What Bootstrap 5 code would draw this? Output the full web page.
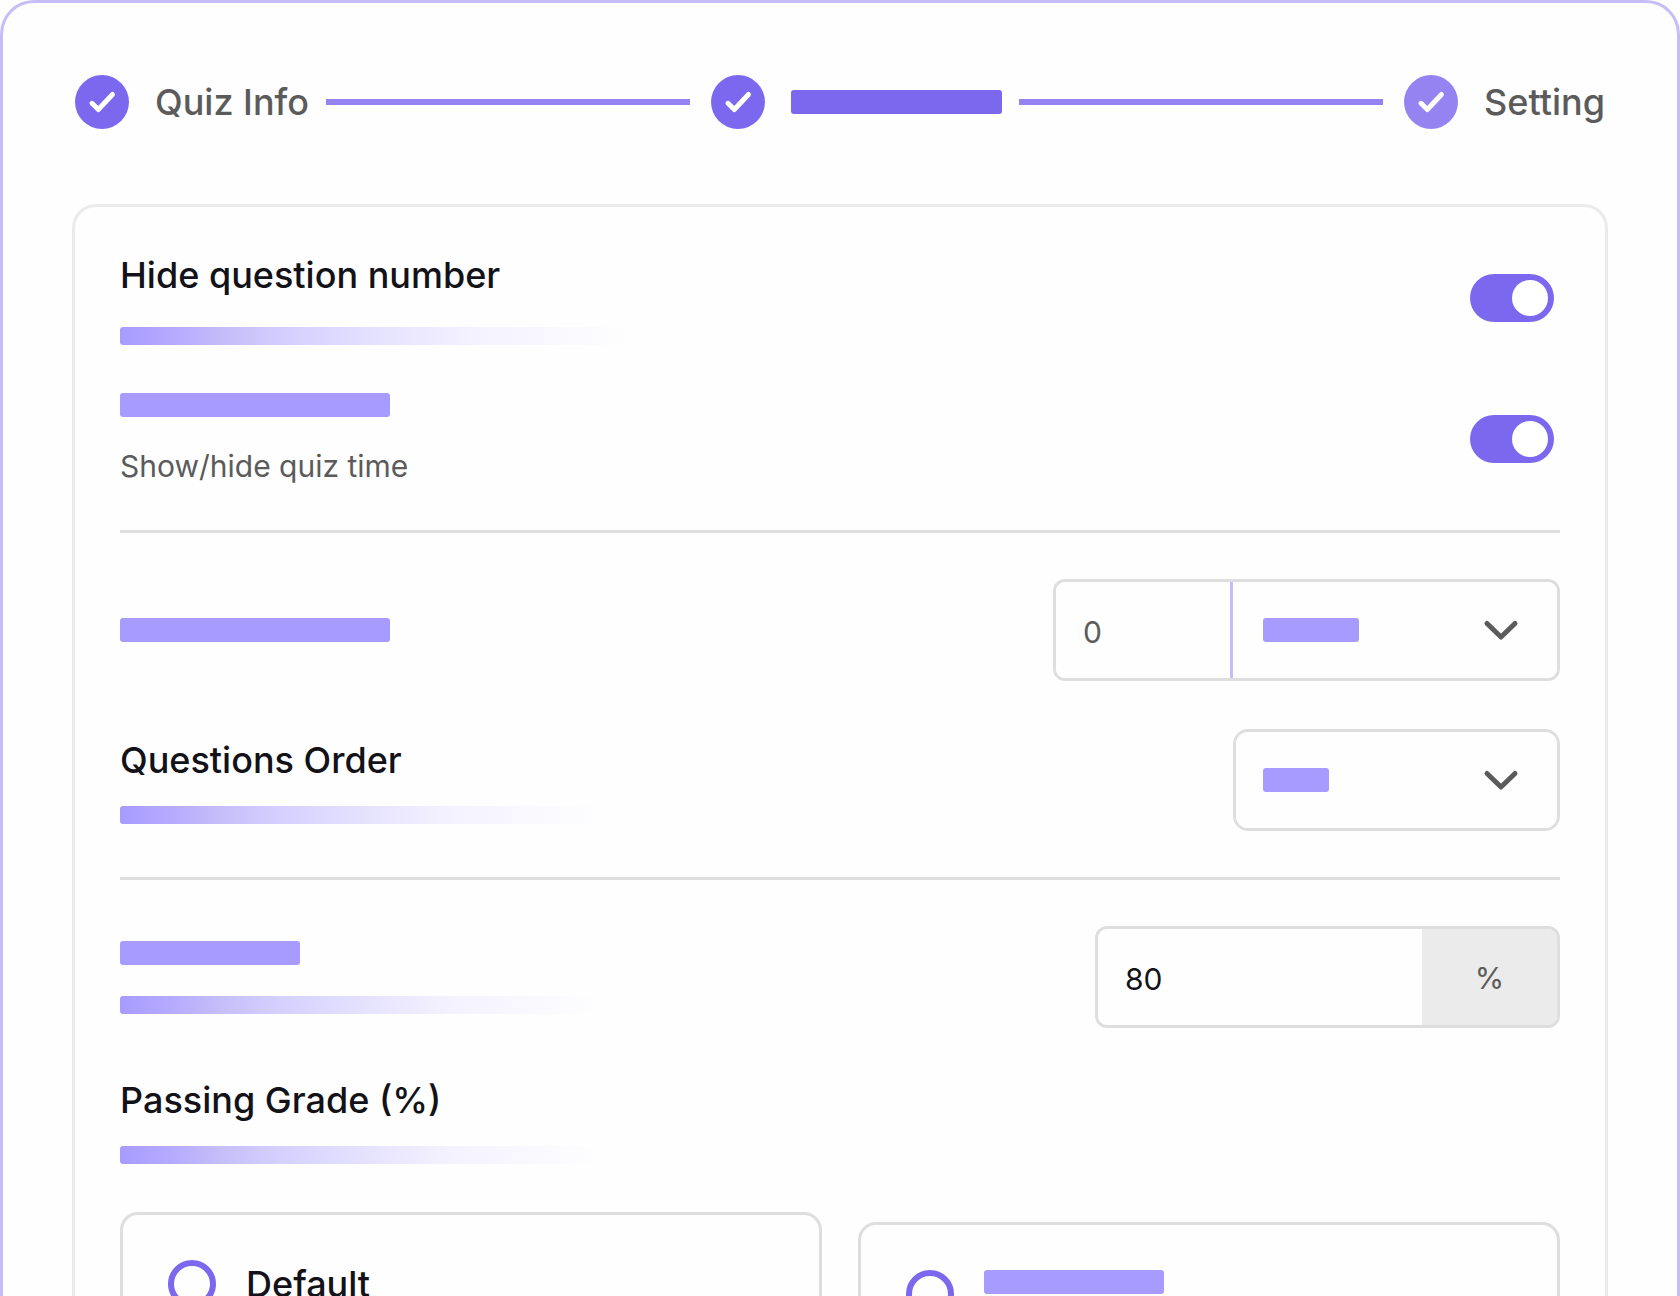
<!DOCTYPE html>
<html lang="en">
<head>
<meta charset="utf-8">
<meta name="viewport" content="width=device-width, initial-scale=1">
<title>Quiz settings</title>
<link href="https://cdn.jsdelivr.net/npm/bootstrap@5.3.0/dist/css/bootstrap.min.css" rel="stylesheet">
<style>
  :root {
    --violet: #7c68ee;
    --violet-mid: #9483f1;
    --violet-soft: #a79bff;
    --violet-pale: #c6bdf8;
    --ink: #121218;
    --ink-soft: #5b5b5b;
    --line: #dedede;
    --line-soft: #ebebeb;
    --paper: #fefefe;
  }
  body { font-family: Inter, "Liberation Sans", sans-serif; color: var(--ink); background: var(--paper); }

  .frame { border: 3px solid var(--violet-pale); border-bottom: 0; border-radius: 34px 34px 0 0; padding: 72px 69px 0; }

  /* Stepper */
  .steps { padding: 0 3px; margin-bottom: 75px; }
  .step { gap: 26px; font-size: 36px; line-height: 54px; font-weight: 500; color: var(--ink-soft); }
  .step-dot { width: 54px; height: 54px; background: var(--violet); }
  .step-dot.is-current { background: var(--violet-mid); }
  .step-line { height: 6px; margin: 0 21px 0 17px; background: var(--violet-mid); }

  /* Settings panel */
  .panel { border: 3px solid var(--line-soft); border-bottom: 0; border-radius: 24px 24px 0 0; padding: 44px 45px 0; }
  .panel-rows { gap: 48px; }
  .panel-rule { height: 3px; margin: 46px 0; border: 0; background: var(--line); opacity: 1; }
  .heading { font-size: 36px; line-height: 48px; font-weight: 500; margin: 0; }
  .hint { font-size: 30px; line-height: 36px; color: var(--ink-soft); margin: 0; }
  .gap-sm { gap: 22px; }
  .gap-md { gap: 28px; }
  .gap-lg { gap: 31px; }

  /* Placeholder bars */
  .bar { display: block; height: 24px; border-radius: 3px; background: var(--violet-soft); }
  .bar-title { width: 211px; background: var(--violet); }
  .bar-270 { width: 270px; }
  .bar-180 { width: 180px; }
  .bar-96 { width: 96px; }
  .bar-66 { width: 66px; }
  .fade-bar { width: 480px; height: 18px; border-radius: 3px;
    background: linear-gradient(90deg, #a79bff 0, #b6abff 11%, #c6bef9 21%, #d4ceff 32%, #e2deff 47%, #f4f2ff 69%, var(--paper) 100%); }
  .fade-bar.is-wide { width: 510px; }

  /* Controls */
  .form-switch.switch { padding: 0; margin: 0 6px 0 0; min-height: 0; }
  .switch .form-check-input { float: none; display: block; width: 84px; height: 48px; margin: 0; border: 0; border-radius: 24px; }
  .switch .form-check-input:checked { background-color: var(--violet); }

  .field { height: 102px; border: 3px solid var(--line); border-radius: 12px; overflow: hidden; }
  .field .form-control, .field .form-select { border: 0; border-radius: 0; background-color: var(--paper); font-size: 30px; height: 96px; color: var(--ink); }
  .field .form-control { padding: 3px 27px 0; }
  .field .form-select { background-image: none; }
  .field .form-control.is-muted { color: var(--ink-soft); }
  .field-time { width: 507px; }
  .field-time .form-control { width: 177px; border-right: 3px solid var(--violet-pale); }
  .field-order { width: 327px; border-radius: 15px; }
  .field-grade { width: 465px; }
  .field-grade .unit { width: 135px; padding-top: 3px; font-size: 30px; color: var(--ink-soft); background: var(--line-soft); }
  .select-face { padding: 0 38px 0 27px; pointer-events: none; }
  .field-time .select-face { padding-left: 30px; }

  .options { gap: 36px; margin-top: 48px; }
  .option { flex: 1 1 0; gap: 30px; min-height: 180px; padding: 45px; border: 3px solid var(--line); border-radius: 18px; }
  .option.is-lower { margin-top: 10px; }
  .option .form-check-input { flex: none; width: 48px; height: 48px; margin: 0; border: 6px solid var(--violet); background-color: var(--paper); }
</style>
</head>
<body>
<svg class="d-none" aria-hidden="true">
  <symbol id="tick" viewBox="0 0 54 54"><path d="M17 28.300 L23.300 34.500 L37.500 19.500" fill="none" stroke="#fff" stroke-width="5" stroke-linecap="round" stroke-linejoin="round"/></symbol>
  <symbol id="chevron" viewBox="0 0 36 24"><path d="M4 5.500 L18 19 L32 5.500" fill="none" stroke="#5b5b5b" stroke-width="5" stroke-linecap="round" stroke-linejoin="round"/></symbol>
</svg>

<main class="frame vh-100 overflow-hidden d-flex flex-column">
  <div class="steps d-flex align-items-center">
    <div class="step d-flex align-items-center">
      <svg class="step-dot rounded-circle" aria-hidden="true"><use href="#tick"/></svg>
      <span>Quiz Info</span>
    </div>
    <div class="step-line flex-fill"></div>
    <div class="step d-flex align-items-center">
      <svg class="step-dot rounded-circle" aria-hidden="true"><use href="#tick"/></svg>
      <span class="bar bar-title"></span>
    </div>
    <div class="step-line flex-fill"></div>
    <div class="step d-flex align-items-center">
      <svg class="step-dot is-current rounded-circle" aria-hidden="true"><use href="#tick"/></svg>
      <span>Setting</span>
    </div>
  </div>

  <form class="panel flex-fill">
    <section class="panel-rows d-flex flex-column">
      <div class="d-flex align-items-center justify-content-between">
        <div class="d-flex flex-column gap-md">
          <label class="heading" for="hideNumber">Hide question number</label>
          <div class="fade-bar is-wide"></div>
        </div>
        <div class="form-check form-switch switch">
          <input class="form-check-input" type="checkbox" role="switch" id="hideNumber" checked>
        </div>
      </div>
      <div class="d-flex align-items-center justify-content-between">
        <div class="d-flex flex-column gap-lg">
          <div class="bar bar-270"></div>
          <label class="hint" for="hideTime">Show/hide quiz time</label>
        </div>
        <div class="form-check form-switch switch">
          <input class="form-check-input" type="checkbox" role="switch" id="hideTime" checked>
        </div>
      </div>
    </section>

    <hr class="panel-rule">

    <section class="panel-rows d-flex flex-column">
      <div class="d-flex align-items-center justify-content-between">
        <div class="bar bar-270"></div>
        <div class="field field-time d-flex">
          <input class="form-control is-muted flex-shrink-0" type="text" inputmode="numeric" value="0" aria-label="Time limit">
          <div class="position-relative flex-fill">
            <select class="form-select" aria-label="Time unit"><option></option></select>
            <div class="select-face position-absolute top-0 start-0 w-100 h-100 d-flex align-items-center justify-content-between">
              <span class="bar bar-96"></span>
              <svg width="36" height="24" aria-hidden="true"><use href="#chevron"/></svg>
            </div>
          </div>
        </div>
      </div>
      <div class="d-flex align-items-center justify-content-between">
        <div class="d-flex flex-column gap-sm">
          <label class="heading" for="order">Questions Order</label>
          <div class="fade-bar"></div>
        </div>
        <div class="field field-order position-relative">
          <select class="form-select" id="order"><option></option></select>
          <div class="select-face position-absolute top-0 start-0 w-100 h-100 d-flex align-items-center justify-content-between">
            <span class="bar bar-66"></span>
            <svg width="36" height="24" aria-hidden="true"><use href="#chevron"/></svg>
          </div>
        </div>
      </div>
    </section>

    <hr class="panel-rule">

    <section class="panel-rows d-flex flex-column">
      <div class="d-flex align-items-center justify-content-between">
        <div class="d-flex flex-column gap-lg">
          <div class="bar bar-180"></div>
          <div class="fade-bar"></div>
        </div>
        <div class="field field-grade d-flex">
          <input class="form-control flex-fill" type="text" inputmode="numeric" value="80" aria-label="Grade">
          <span class="unit flex-shrink-0 d-flex align-items-center justify-content-center">%</span>
        </div>
      </div>
      <div class="d-flex flex-column gap-sm">
        <h2 class="heading">Passing Grade (%)</h2>
        <div class="fade-bar"></div>
      </div>
    </section>

    <div class="options d-flex align-items-start">
      <div class="option d-flex align-items-start">
        <input class="form-check-input" type="radio" name="layout" id="layoutDefault">
        <label class="heading" for="layoutDefault">Default</label>
      </div>
      <div class="option is-lower d-flex align-items-start">
        <input class="form-check-input" type="radio" name="layout" id="layoutOther" aria-label="Other">
        <label class="bar bar-180" for="layoutOther"></label>
      </div>
    </div>
  </form>
</main>
<script src="https://cdn.jsdelivr.net/npm/bootstrap@5.3.0/dist/js/bootstrap.bundle.min.js"></script>
</body>
</html>
